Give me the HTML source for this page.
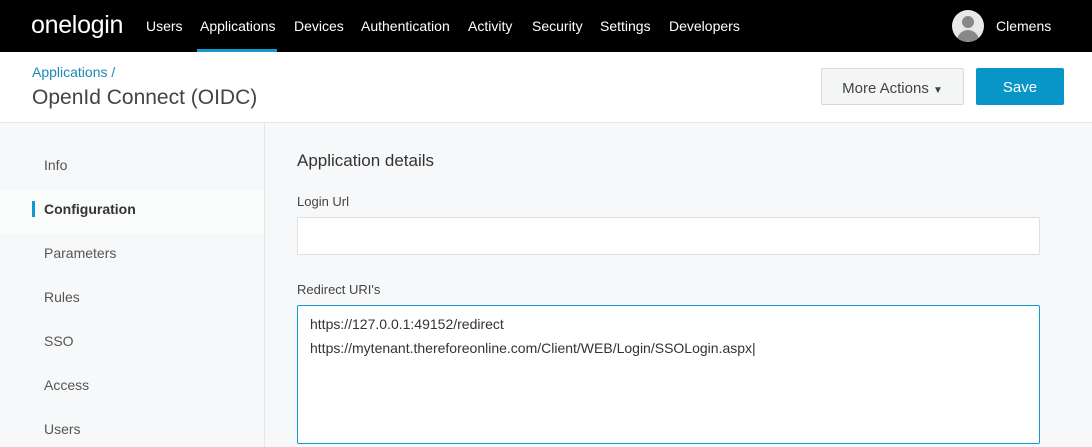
<!DOCTYPE html>
<html><head><style>
*{margin:0;padding:0;box-sizing:border-box}
body{width:1092px;height:447px;overflow:hidden;font-family:"Liberation Sans",sans-serif;background:#f7f8f9;position:relative}
.nav{position:absolute;left:0;top:0;width:1092px;height:52px;background:#000;color:#fff}
.logo{position:absolute;left:31px;top:11px;font-size:25px;font-weight:normal;letter-spacing:-0.3px}
.nav a{position:absolute;top:18px;font-size:14px;color:#fff}
.ul{position:absolute;left:197px;top:49px;width:80px;height:3px;background:#0f9ad2}
.av{position:absolute;left:952px;top:10px;width:32px;height:32px;border-radius:50%;background:#e8e8e8;overflow:hidden}
.hdr{position:absolute;left:0;top:52px;width:1092px;height:71px;background:#fff;border-bottom:1px solid #e4e6e8}
.side{position:absolute;left:0;top:123px;width:265px;height:324px;border-right:1px solid #e4e6e8}
.side div{position:absolute;left:44px;font-size:14px;color:#555}
.btn{position:absolute;top:68px;height:37px;border-radius:2px;font-size:15px;text-align:center;line-height:39px}
.inp{position:absolute;left:297px;width:743px;background:#fff;border:1px solid #dde0e3;border-radius:2px}
.lbl{position:absolute;left:297px;font-size:13px;color:#444}
</style></head><body>
<div class="nav">
<div class="logo">onelogin</div>
<a style="left:146px">Users</a><a style="left:200px">Applications</a><a style="left:294px">Devices</a><a style="left:361px">Authentication</a><a style="left:468px">Activity</a><a style="left:532px">Security</a><a style="left:600px">Settings</a><a style="left:669px">Developers</a>
<div class="ul"></div>
<div class="av"><div style="position:absolute;left:10px;top:6px;width:12px;height:12px;border-radius:50%;background:#888"></div><div style="position:absolute;left:5px;top:20px;width:22px;height:16px;border-radius:11px 11px 0 0;background:#888"></div></div>
<a style="left:996px">Clemens</a>
</div>
<div class="hdr">
<div style="position:absolute;left:32px;top:12px;font-size:14px;color:#1a8ab4">Applications /</div>
<div style="position:absolute;left:32px;top:34px;font-size:21px;color:#444">OpenId Connect (OIDC)</div>
</div>
<div class="btn" style="left:821px;width:143px;background:#f4f5f5;border:1px solid #d6d8da;color:#444">More Actions <span style="font-size:10px">&#9660;</span></div>
<div class="btn" style="left:976px;width:88px;background:#0896c9;color:#fff">Save</div>
<div class="side">
<div style="top:34px">Info</div>
<div style="top:67px;left:0;width:264px;height:44px;background:#fafbfb"></div>
<div style="top:78px;left:32px;width:3px;height:16px;background:#0f9ad2"></div>
<div style="top:78px;font-weight:bold;color:#333">Configuration</div>
<div style="top:122px">Parameters</div>
<div style="top:166px">Rules</div>
<div style="top:210px">SSO</div>
<div style="top:254px">Access</div>
<div style="top:298px">Users</div>
</div>
<div style="position:absolute;left:297px;top:151px;font-size:17px;color:#333">Application details</div>
<div class="lbl" style="top:194px">Login Url</div>
<div class="inp" style="top:217px;height:38px"></div>
<div class="lbl" style="top:282px">Redirect URI's</div>
<div class="inp" style="top:305px;height:139px;border-color:#0f9ad2;font-size:14px;color:#333;padding:6px 12px;line-height:24px">https://127.0.0.1:49152/redirect<br>https://mytenant.thereforeonline.com/Client/WEB/Login/SSOLogin.aspx|</div>
</body></html>
